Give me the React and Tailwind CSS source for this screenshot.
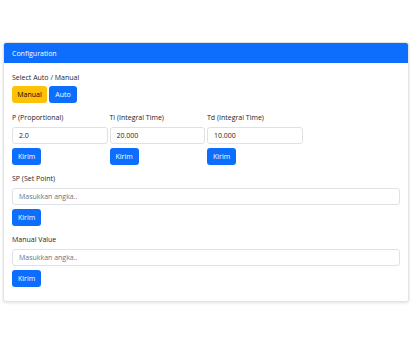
import React, { useState } from "react";

const inputCls =
  "block h-[17px] w-full rounded-[3px] border border-[#dee2e6] bg-white px-[6px] text-[7px] text-[#212529] placeholder:text-[#6c757d] outline-none";
const btnCls =
  "block h-[17px] rounded-[3px] bg-[#0d6efd] px-[6px] text-[7px] leading-[17px] text-white";

const Field = ({ label, value, placeholder }) => (
  <div>
    <label className="block text-[7px] leading-[11px] text-[#212529]">{label}</label>
    <input
      className={`${inputCls} mt-[4px]`}
      defaultValue={value}
      placeholder={placeholder}
    />
    <button className={`${btnCls} mt-[4px]`}>Kirim</button>
  </div>
);

const App = () => {
  const [mode, setMode] = useState("manual");

  return (
    <div className="min-h-screen w-[415px] bg-white px-[3px] pt-[42px] font-['Open_Sans',sans-serif] leading-[11px]">
      <div className="w-[406px] overflow-hidden rounded-[3px] border border-[#e3e3e3] bg-white shadow-[0_1px_3px_rgba(0,0,0,0.12)]">
        {/* Header */}
        <div className="flex h-[20px] items-center bg-[#0d6efd] px-[8px] text-[7px] text-white">
          Configuration
        </div>

        <div className="px-[8px] pt-[9px] pb-[14px]">
          {/* Mode */}
          <div className="text-[7px] leading-[11px] text-[#212529]">Select Auto / Manual</div>
          <div className="mt-[3px] flex gap-[2px]">
            <button
              onClick={() => setMode("manual")}
              className="block h-[17px] w-[35px] rounded-[3px] bg-[#ffc107] text-[7px] text-black"
            >
              Manual
            </button>
            <button
              onClick={() => setMode("auto")}
              className="block h-[17px] w-[28px] rounded-[3px] bg-[#0d6efd] text-[7px] text-white"
            >
              Auto
            </button>
          </div>

          {/* PID */}
          <div className="mt-[9px] grid grid-cols-4 gap-[2px]">
            <Field label="P (Proportional)" value="2.0" />
            <Field label="Ti (Integral Time)" value="20.000" />
            <Field label="Td (Integral Time)" value="10.000" />
          </div>

          <div className="mt-[8px]">
            <Field label="SP (Set Point)" placeholder="Masukkan angka.." />
          </div>

          <div className="mt-[8px]">
            <Field label="Manual Value" placeholder="Masukkan angka.." />
          </div>
        </div>
      </div>
    </div>
  );
};

export default App;
